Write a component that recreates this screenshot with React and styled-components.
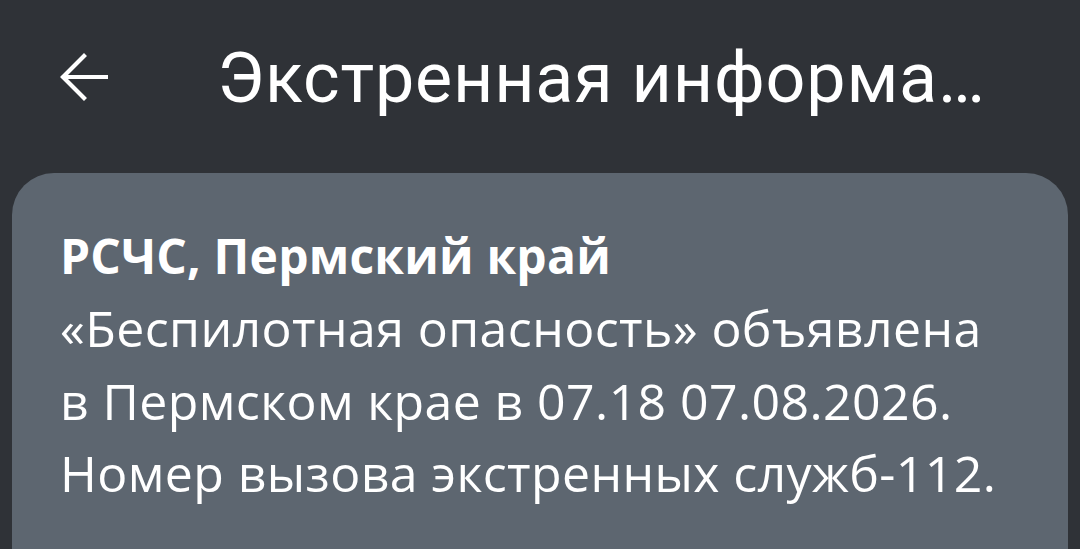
import React from "react"
import styled, { createGlobalStyle } from "styled-components"

const GlobalStyle = createGlobalStyle`
  html, body {
    margin: 0;
    padding: 0;
    background: #2f3237;
    overflow: hidden;
  }
`

const Screen = styled.div`
  width: 1080px;
  height: 549px;
  background: #2f3237;
  display: flex;
  flex-direction: column;
  overflow: hidden;
`

const TopBar = styled.div`
  height: 173px;
  box-sizing: border-box;
  display: flex;
  align-items: flex-start;
  padding: 30px 0 0 60px;
  gap: 109px;
`

const BackButton = styled.button`
  width: 48px;
  height: 48px;
  margin-top: 23px;
  padding: 0;
  border: none;
  background: none;
  color: #ffffff;
  display: flex;
  align-items: center;
  justify-content: center;
  flex-shrink: 0;
`

const Title = styled.h1`
  margin: 0;
  font-family: Roboto, "Liberation Sans", sans-serif;
  font-weight: 400;
  font-size: 70px;
  line-height: 96px;
  letter-spacing: 0.8px;
  color: #ffffff;
  white-space: nowrap;
  overflow: hidden;
  text-overflow: ellipsis;
  max-width: 800px;
`

const Card = styled.div`
  margin: 0 12px;
  flex: 1;
  background: #5d6670;
  border-radius: 42px 42px 0 0;
  padding: 47px 40px 0 48px;
  font-family: "Open Sans", "Liberation Sans", sans-serif;
  color: #ffffff;
`

const Sender = styled.div`
  font-weight: 700;
  font-size: 48px;
  line-height: 72px;
  letter-spacing: 0.2px;
`

const Message = styled.p`
  margin: 0;
  font-weight: 400;
  font-size: 50px;
  line-height: 72.5px;
  letter-spacing: 0.4px;
  white-space: nowrap;
`

function ArrowBack() {
  return (
    <svg width="48" height="48" viewBox="0 0 48 48" fill="none" stroke="currentColor" strokeWidth="4.2" strokeLinecap="square">
      <path d="M46 24H4" />
      <path d="M24 3L3 24l21 21" strokeLinejoin="miter" />
    </svg>
  )
}

export default function App() {
  return (
    <>
      <GlobalStyle />
      <Screen>
        <TopBar>
          <BackButton aria-label="Назад">
            <ArrowBack />
          </BackButton>
          <Title>Экстренная информация</Title>
        </TopBar>
        <Card>
          <Sender>РСЧС, Пермский край</Sender>
          <Message>
            «Беспилотная опасность» объявлена<br />
            в Пермском крае в 07.18 07.08.2026.<br />
            Номер вызова экстренных служб-112.
          </Message>
        </Card>
      </Screen>
    </>
  )
}
